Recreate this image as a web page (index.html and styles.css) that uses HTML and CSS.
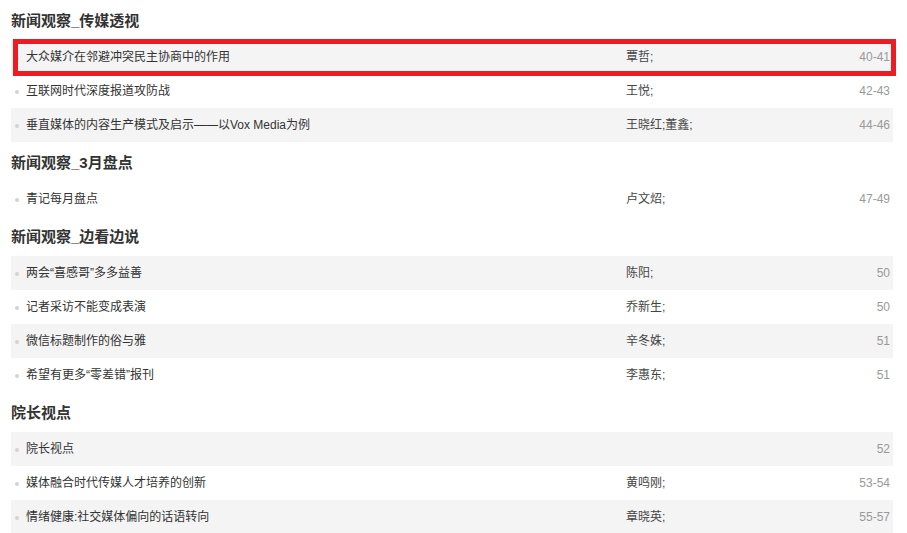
FILE: index.html
```html
<!DOCTYPE html>
<html lang="zh-CN">
<head>
<meta charset="utf-8">
<title>目录</title>
<link rel="stylesheet" href="styles.css">
</head>
<body>
<div class="toc">
  <h2 class="sec-title">新闻观察_传媒透视</h2>
  <ul class="list">
    <li class="row gray current"><span class="title">大众媒介在邻避冲突民主协商中的作用</span><span class="author">覃哲;</span><span class="pages">40-41</span></li>
    <li class="row"><span class="title">互联网时代深度报道攻防战</span><span class="author">王悦;</span><span class="pages">42-43</span></li>
    <li class="row gray"><span class="title">垂直媒体的内容生产模式及启示——以Vox Media为例</span><span class="author">王晓红;董鑫;</span><span class="pages">44-46</span></li>
  </ul>
  <h2 class="sec-title">新闻观察_3月盘点</h2>
  <ul class="list">
    <li class="row"><span class="title">青记每月盘点</span><span class="author">卢文炤;</span><span class="pages">47-49</span></li>
  </ul>
  <h2 class="sec-title">新闻观察_边看边说</h2>
  <ul class="list">
    <li class="row gray"><span class="title">两会“喜感哥”多多益善</span><span class="author">陈阳;</span><span class="pages">50</span></li>
    <li class="row"><span class="title">记者采访不能变成表演</span><span class="author">乔新生;</span><span class="pages">50</span></li>
    <li class="row gray"><span class="title">微信标题制作的俗与雅</span><span class="author">辛冬姝;</span><span class="pages">51</span></li>
    <li class="row"><span class="title">希望有更多“零差错”报刊</span><span class="author">李惠东;</span><span class="pages">51</span></li>
  </ul>
  <h2 class="sec-title">院长视点</h2>
  <ul class="list">
    <li class="row gray"><span class="title">院长视点</span><span class="author"></span><span class="pages">52</span></li>
    <li class="row"><span class="title">媒体融合时代传媒人才培养的创新</span><span class="author">黄鸣刚;</span><span class="pages">53-54</span></li>
    <li class="row gray"><span class="title">情绪健康:社交媒体偏向的话语转向</span><span class="author">章晓英;</span><span class="pages">55-57</span></li>
  </ul>
</div>
</body>
</html>
```
FILE: styles.css
```css
html, body {
  margin: 0;
  padding: 0;
  background: #ffffff;
}
body {
  font-family: "Liberation Sans", "Noto Sans CJK SC", sans-serif;
  color: #333333;
}
.toc {
  width: 882px;
  margin-left: 11px;
}
.sec-title {
  margin: 0;
  height: 40px;
  line-height: 41px;
  font-size: 15px;
  font-weight: bold;
  color: #333333;
  font-family: "Liberation Sans", "Noto Sans CJK SC", sans-serif;
}
.list {
  list-style: none;
  margin: 0;
  padding: 0;
}
.row {
  position: relative;
  display: grid;
  grid-template-columns: 600px 1fr auto;
  align-items: center;
  height: 34px;
  padding: 0 3px 0 15px;
  font-size: 12px;
  line-height: 34px;
}
.row::before {
  content: "";
  position: absolute;
  left: 4px;
  top: 16px;
  width: 4px;
  height: 4px;
  border-radius: 50%;
  background: #d3d3d3;
}
.row.gray {
  background: #f4f4f4;
}
.row.current::after {
  content: "";
  position: absolute;
  left: 2px;
  right: -3px;
  top: -1px;
  bottom: -2px;
  border: 5px solid #ec1c24;
  pointer-events: none;
}
.title {
  color: #333333;
  white-space: nowrap;
}
.author {
  color: #444444;
}
.pages {
  color: #999999;
  text-align: right;
}
```
